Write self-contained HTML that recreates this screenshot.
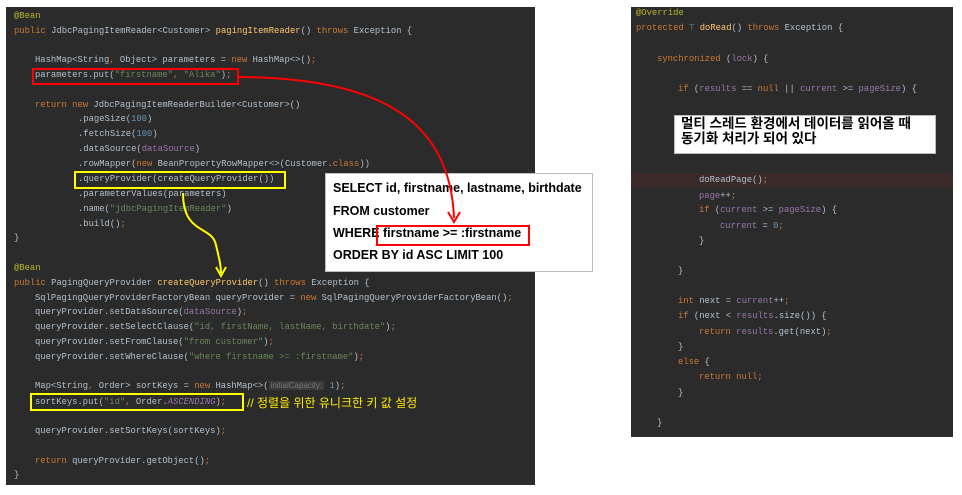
<!DOCTYPE html>
<html><head><meta charset="utf-8"><style>
body{margin:0;width:962px;height:495px;background:#fff;position:relative;overflow:hidden}
.p{position:absolute;background:#2b2b2b}
.l{position:absolute;white-space:pre;font-family:"Liberation Mono",monospace;font-size:8.85px;color:#b3c0cc;line-height:12px}
.k{color:#cc7832}.s{color:#6a8759}.n{color:#6897bb}.a{color:#bbb529}.m{color:#ffc66d}.f{color:#9876aa}.i{font-style:italic;color:#9876aa}
.hint{background:#3b3b3b;color:#787878;font-family:"Liberation Sans",sans-serif;font-size:8px;padding:0 2px}
.box{position:absolute;box-sizing:border-box}
.sql{position:absolute;font-family:"Liberation Sans","Noto Sans CJK KR",sans-serif;font-weight:bold;font-size:12.5px;color:#000;white-space:pre}
</style></head><body>
<div class="p" style="left:6px;top:7px;width:529px;height:478px"></div>
<div class="p" style="left:631px;top:7px;width:322px;height:430px"></div>
<div style="position:absolute;left:631px;top:173px;width:322px;height:15px;background:#3a2a2a"></div>

<div class="l a" style="left:14px;top:10px">@Bean</div>
<div class="l" style="left:14px;top:25px"><span class="k">public</span> JdbcPagingItemReader&lt;Customer&gt; <span class="m">pagingItemReader</span>() <span class="k">throws</span> Exception {</div>
<div class="l" style="left:35px;top:54px">HashMap&lt;String<span class="k">,</span> Object&gt; parameters = <span class="k">new</span> HashMap&lt;&gt;()<span class="k">;</span></div>
<div class="l" style="left:35px;top:69px">parameters.put(<span class="s">"firstname"</span><span class="k">,</span> <span class="s">"Alika"</span>)<span class="k">;</span></div>
<div class="l" style="left:35px;top:99px"><span class="k">return new</span> JdbcPagingItemReaderBuilder&lt;Customer&gt;()</div>
<div class="l" style="left:78px;top:113px">.pageSize(<span class="n">100</span>)</div>
<div class="l" style="left:78px;top:128px">.fetchSize(<span class="n">100</span>)</div>
<div class="l" style="left:78px;top:143px">.dataSource(<span class="f">dataSource</span>)</div>
<div class="l" style="left:78px;top:158px">.rowMapper(<span class="k">new</span> BeanPropertyRowMapper&lt;&gt;(Customer.<span class="k">class</span>))</div>
<div class="l" style="left:78px;top:173px">.queryProvider(createQueryProvider())</div>
<div class="l" style="left:78px;top:188px">.parameterValues(parameters)</div>
<div class="l" style="left:78px;top:203px">.name(<span class="s">"jdbcPagingItemReader"</span>)</div>
<div class="l" style="left:78px;top:218px">.build()<span class="k">;</span></div>
<div class="l" style="left:14px;top:232px">}</div>
<div class="l a" style="left:14px;top:262px">@Bean</div>
<div class="l" style="left:14px;top:277px"><span class="k">public</span> PagingQueryProvider <span class="m">createQueryProvider</span>() <span class="k">throws</span> Exception {</div>
<div class="l" style="left:35px;top:292px">SqlPagingQueryProviderFactoryBean queryProvider = <span class="k">new</span> SqlPagingQueryProviderFactoryBean()<span class="k">;</span></div>
<div class="l" style="left:35px;top:306px">queryProvider.setDataSource(<span class="f">dataSource</span>)<span class="k">;</span></div>
<div class="l" style="left:35px;top:321px">queryProvider.setSelectClause(<span class="s">"id, firstName, lastName, birthdate"</span>)<span class="k">;</span></div>
<div class="l" style="left:35px;top:336px">queryProvider.setFromClause(<span class="s">"from customer"</span>)<span class="k">;</span></div>
<div class="l" style="left:35px;top:351px">queryProvider.setWhereClause(<span class="s">"where firstname &gt;= :firstname"</span>)<span class="k">;</span></div>
<div class="l" style="left:35px;top:380px">Map&lt;String<span class="k">,</span> Order&gt; sortKeys = <span class="k">new</span> HashMap&lt;&gt;(<span class="hint">initialCapacity:</span> <span class="n">1</span>)<span class="k">;</span></div>
<div class="l" style="left:35px;top:396px">sortKeys.put(<span class="s">"id"</span><span class="k">,</span> Order.<span class="i">ASCENDING</span>)<span class="k">;</span></div>
<div class="l" style="left:35px;top:425px">queryProvider.setSortKeys(sortKeys)<span class="k">;</span></div>
<div class="l" style="left:35px;top:455px"><span class="k">return</span> queryProvider.getObject()<span class="k">;</span></div>
<div class="l" style="left:14px;top:469px">}</div>
<div class="sql" style="left:247px;top:394px;color:#ffeb00;font-weight:normal;font-size:12px">// 정렬을 위한 유니크한 키 값 설정</div>

<div class="l a" style="left:636px;top:7px">@Override</div>
<div class="l" style="left:636px;top:22px"><span class="k">protected</span> <span style="color:#507874">T</span> <span class="m">doRead</span>() <span class="k">throws</span> Exception {</div>
<div class="l" style="left:657px;top:53px"><span class="k">synchronized</span> (<span class="f">lock</span>) {</div>
<div class="l" style="left:678px;top:83px"><span class="k">if</span> (<span class="f">results</span> == <span class="k">null</span> || <span class="f">current</span> &gt;= <span class="f">pageSize</span>) {</div>
<div class="l" style="left:699px;top:174px">doReadPage()<span class="k">;</span></div>
<div class="l" style="left:699px;top:190px"><span class="f">page</span>++<span class="k">;</span></div>
<div class="l" style="left:699px;top:204px"><span class="k">if</span> (<span class="f">current</span> &gt;= <span class="f">pageSize</span>) {</div>
<div class="l" style="left:720px;top:220px"><span class="f">current</span> = <span class="n">0</span><span class="k">;</span></div>
<div class="l" style="left:699px;top:235px">}</div>
<div class="l" style="left:678px;top:265px">}</div>
<div class="l" style="left:678px;top:295px"><span class="k">int</span> next = <span class="f">current</span>++<span class="k">;</span></div>
<div class="l" style="left:678px;top:310px"><span class="k">if</span> (next &lt; <span class="f">results</span>.size()) {</div>
<div class="l" style="left:699px;top:326px"><span class="k">return</span> <span class="f">results</span>.get(next)<span class="k">;</span></div>
<div class="l" style="left:678px;top:341px">}</div>
<div class="l" style="left:678px;top:356px"><span class="k">else</span> {</div>
<div class="l" style="left:699px;top:371px"><span class="k">return null;</span></div>
<div class="l" style="left:678px;top:387px">}</div>
<div class="l" style="left:657px;top:417px">}</div>

<div class="box" style="left:674px;top:115px;width:262px;height:39px;background:#fff;border:1px solid #bbb"></div>
<div class="sql" style="left:681px;top:116px;line-height:15px;font-size:13.5px">멀티 스레드 환경에서 데이터를 읽어올 때
동기화 처리가 되어 있다</div>

<div class="box" style="left:325px;top:173px;width:268px;height:99px;background:#fff;border:1px solid #bbb"></div>
<div class="sql" style="left:333px;top:181px">SELECT id, firstname, lastname, birthdate</div>
<div class="sql" style="left:333px;top:204px">FROM customer</div>
<div class="sql" style="left:333px;top:226px">WHERE firstname &gt;= :firstname</div>
<div class="sql" style="left:333px;top:248px">ORDER BY id ASC LIMIT 100</div>

<div class="box" style="left:32px;top:68px;width:207px;height:17px;border:2px solid #f00"></div>
<div class="box" style="left:376px;top:225px;width:154px;height:21px;border:2px solid #f00"></div>
<div class="box" style="left:74px;top:171px;width:212px;height:18px;border:2px solid #ff0"></div>
<div class="box" style="left:30px;top:393px;width:214px;height:18px;border:2px solid #ff0"></div>

<svg style="position:absolute;left:0;top:0" width="962" height="495">
<path d="M239 77 C 380 78, 450 120, 454 218" fill="none" stroke="#f00" stroke-width="2"/>
<path d="M448 212 L454 222 L460 212" fill="none" stroke="#f00" stroke-width="2"/>
<path d="M183 193 C 183 235, 212 225, 216 245 C 219 258, 221 265, 221 273" fill="none" stroke="#ff0" stroke-width="2"/>
<path d="M216 267 L221 276 L226 267" fill="none" stroke="#ff0" stroke-width="2"/>
</svg>
</body></html>
